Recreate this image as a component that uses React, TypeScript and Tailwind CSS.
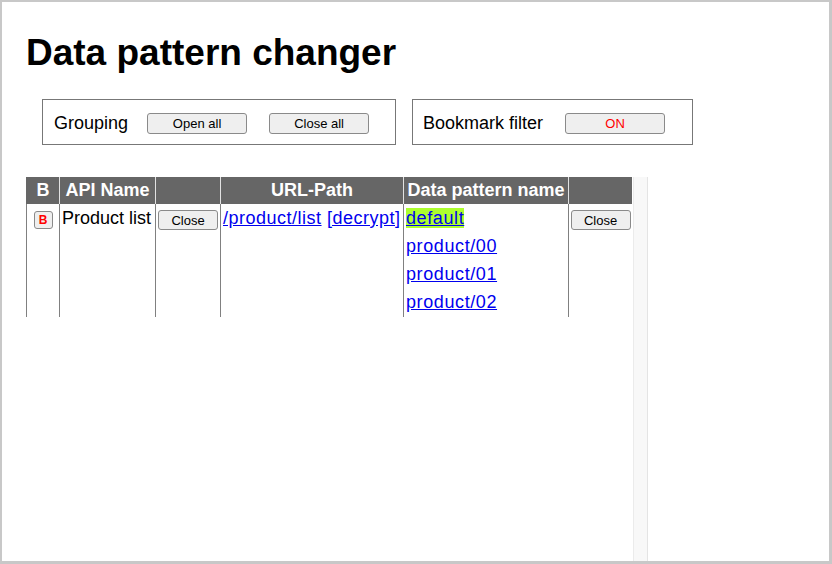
import React from 'react';

const patterns = ['default', 'product/00', 'product/01', 'product/02'];

const Btn: React.FC<{ label: string; className?: string }> = ({ label, className = '' }) => (
  <button
    className={`rounded-[3px] border border-[#8a8a8a] bg-[#efefef] text-[13px] leading-none text-black ${className}`}
  >
    {label}
  </button>
);

export default function App() {
  return (
    <div className="flex h-[564px] w-[832px] flex-col border-t-2 border-r-[3px] border-b-[3px] border-l-2 border-[#c8c8c8] bg-white pl-[24px] font-['Liberation_Sans',Arial,sans-serif] text-black">
      <h1 className="mt-[29px] text-[37px] font-bold leading-[44px]">Data pattern changer</h1>

      {/* controls */}
      <div className="mt-[24px] ml-[16px] flex gap-4">
        <div className="flex h-[46px] w-[354px] items-center border border-[#777] pt-[3px] pl-[11px]">
          <span className="text-[18px]">Grouping</span>
          <Btn label="Open all" className="ml-[19px] h-[21px] w-[100px]" />
          <Btn label="Close all" className="ml-[22px] h-[21px] w-[100px]" />
        </div>
        <div className="flex h-[46px] w-[281px] items-center border border-[#777] pt-[3px] pl-[10px]">
          <span className="text-[18px]">Bookmark filter</span>
          <Btn label="ON" className="ml-[22px] h-[21px] w-[100px] !text-[#ff0000]" />
        </div>
      </div>

      {/* table */}
      <div className="mt-[32px] flex flex-1">
        <table className="w-[606px] table-fixed self-start border-separate border-spacing-0">
          <colgroup>
            <col className="w-[33px]" />
            <col className="w-[96px]" />
            <col className="w-[65px]" />
            <col className="w-[183px]" />
            <col className="w-[165px]" />
            <col className="w-[64px]" />
          </colgroup>
          <thead>
            <tr className="h-[26px] bg-[#666] text-[18px] font-bold text-white">
              <th className="border-l border-[#666] p-0 text-center">B</th>
              <th className="border-l border-[#e2e2e2] p-0 text-center">API Name</th>
              <th className="border-l border-[#e2e2e2] p-0"></th>
              <th className="border-l border-[#e2e2e2] p-0 text-center">URL-Path</th>
              <th className="border-l border-[#e2e2e2] p-0 text-center whitespace-nowrap">Data pattern name</th>
              <th className="border-l border-[#e2e2e2] p-0"></th>
            </tr>
          </thead>
          <tbody className="text-[18px] leading-[28px]">
            <tr>
              <td className="border-l border-[#808080] p-0 align-top">
                <div className="flex justify-center pt-[7px]">
                  <button className="h-[18px] w-[19px] rounded-[3px] border border-[#8a8a8a] bg-[#efefef] text-[12px] font-bold leading-none text-[#ff0000]">
                    B
                  </button>
                </div>
              </td>
              <td className="border-l border-[#808080] px-[2px] py-0 align-top whitespace-nowrap">Product list</td>
              <td className="border-l border-[#808080] p-0 align-top">
                <div className="flex justify-center pt-[6px]">
                  <Btn label="Close" className="h-[20px] w-[60px]" />
                </div>
              </td>
              <td className="border-l border-[#808080] px-[2px] py-0 align-top whitespace-nowrap tracking-[0.5px]">
                <a href="#" className="text-[#0000ee] underline">/product/list</a>{' '}
                <a href="#" className="text-[#0000ee] underline">[decrypt]</a>
              </td>
              <td className="border-l border-[#808080] px-[2px] pt-0 pb-[1px] align-top tracking-[0.6px]">
                {patterns.map((p, i) => (
                  <div key={p}>
                    <a href="#" className={`text-[#0000ee] underline ${i === 0 ? 'bg-[#adff2f]' : ''}`}>
                      {p}
                    </a>
                  </div>
                ))}
              </td>
              <td className="border-l border-[#808080] p-0 align-top">
                <div className="flex justify-center pt-[6px]">
                  <Btn label="Close" className="h-[20px] w-[60px]" />
                </div>
              </td>
            </tr>
          </tbody>
        </table>
        <div className="ml-[1px] w-[15px] border-x border-l-[#ebebeb] border-r-[#e4e4e4] bg-[#f8f8f8]"></div>
      </div>
    </div>
  );
}
